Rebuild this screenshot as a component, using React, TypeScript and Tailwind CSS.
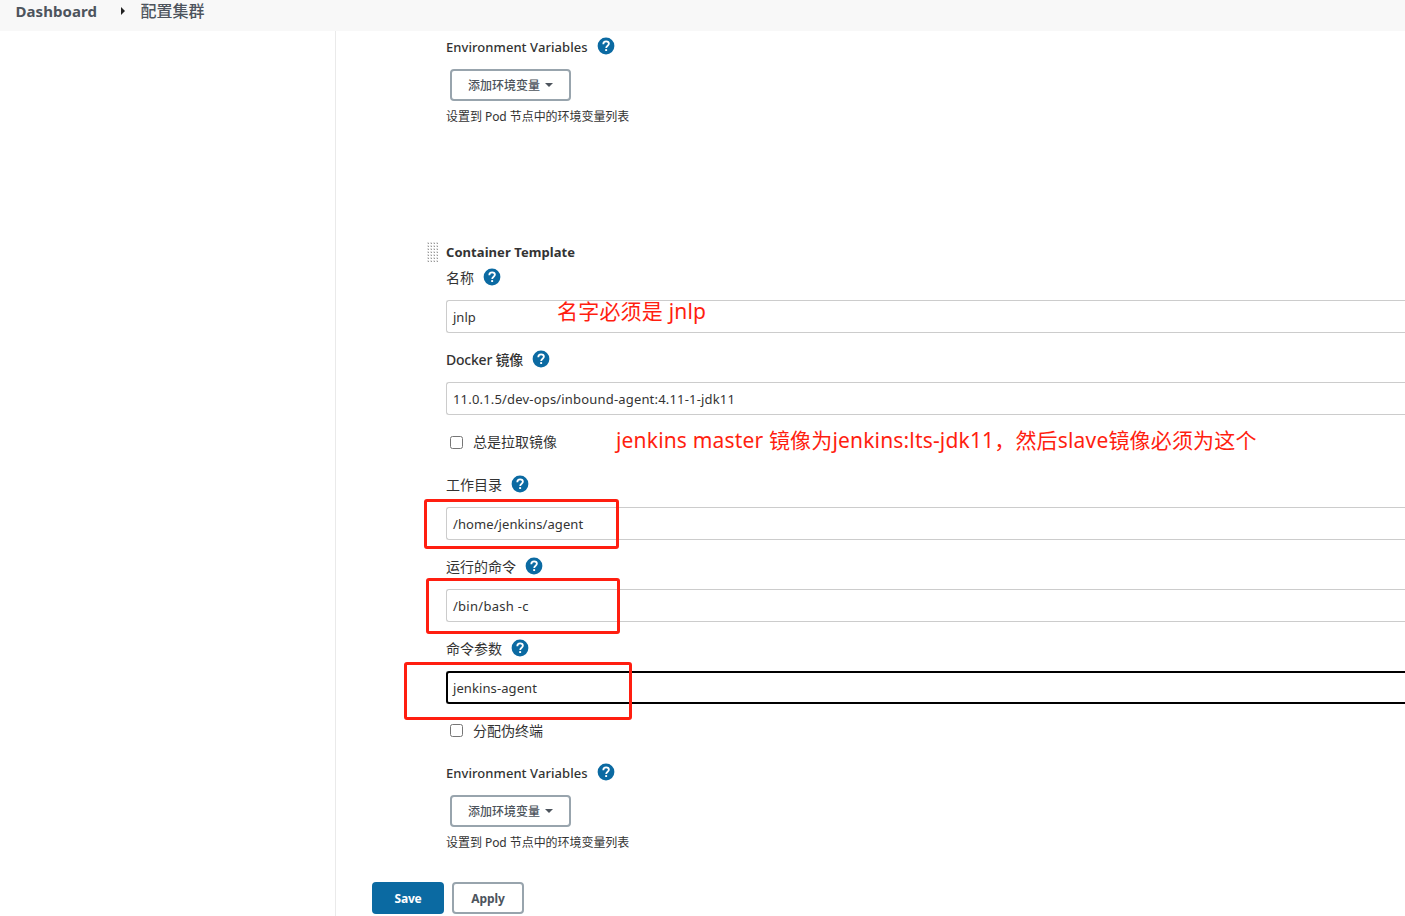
import type { ReactNode } from 'react';

function HelpIcon() {
  return (
    <svg className="size-5 shrink-0" viewBox="0 0 20 20" fill="none">
      <circle cx="10" cy="10" r="8.4" fill="#0b6aa2" />
      <path
        d="M7.3 8.2C7.3 6.4 8.5 5.4 10.1 5.4s2.8 1 2.8 2.4c0 1.9-2.7 2.1-2.7 4.2"
        stroke="#fff"
        strokeWidth="1.8"
      />
      <rect x="9.2" y="13.1" width="1.9" height="1.9" fill="#fff" />
    </svg>
  );
}

function Label({ text, track = '' }: { text: string; track?: string }) {
  return (
    <div className="flex h-5 items-center gap-2 text-sm leading-5 text-[#333]">
      <span className={`relative top-px whitespace-pre ${track}`}>{text}</span>
      <HelpIcon />
    </div>
  );
}

function Field({ value, track = '', focused = false, mark }: { value: string; track?: string; focused?: boolean; mark?: ReactNode }) {
  return (
    <div className="relative mt-[13px] h-[33px]">
      <div
        className={`flex h-[33px] items-center rounded-l-[3px] text-[#333] ${
          focused ? 'border-2 border-r-0 border-black pl-[5px]' : 'border border-r-0 border-[#ccc] pl-1.5'
        }`}
      >
        <span className={`relative top-px whitespace-pre text-[13px] ${track}`}>{value}</span>
      </div>
      {mark}
    </div>
  );
}

function Check({ text, textClass = '', mark }: { text: string; textClass?: string; mark?: ReactNode }) {
  return (
    <div className="relative flex h-5 items-center gap-2.5 pl-1 text-sm leading-5 text-[#333]">
      <span className="size-[13px] rounded-[2.5px] border border-[#767676] bg-white" />
      <span className={textClass}>{text}</span>
      {mark}
    </div>
  );
}

function EnvVars() {
  return (
    <>
      <Label text="Environment Variables" track="text-[13px] font-medium tracking-[0.06px]" />
      <button className="ml-1 mt-[13px] flex h-8 w-[121px] items-center justify-center gap-[5px] rounded-[4px] border-2 border-[#98a4ad] bg-white text-xs font-medium text-[#4d545d]">
        <span className="relative top-px">添加环境变量</span>
        <svg width="8" height="4" viewBox="0 0 8 4" fill="#4d545d">
          <path d="M0 0h8L4 4z" />
        </svg>
      </button>
      <p className="mt-1.5 h-[18px] whitespace-pre text-xs leading-[19px] tracking-[-0.05px] text-[#333]">设置到 Pod 节点中的环境变量列表</p>
    </>
  );
}

export default function App() {
  return (
    <div className="flex h-[916px] w-[1405px] flex-col overflow-hidden bg-white font-['Noto_Sans','Noto_Sans_CJK_SC',sans-serif]">
      <header className="flex h-[31px] shrink-0 items-start bg-[#f8f8f8] pl-[15.5px] text-base text-[#4d545d]">
        <span className="w-[105px] text-[15px] font-bold leading-[23px] tracking-[0.05px]">Dashboard</span>
        <svg className="mt-[7px] w-[4px]" height="8" viewBox="0 0 4 8" fill="#222">
          <path d="M0 0L4 4L0 8z" />
        </svg>
        <span className="ml-4 font-medium leading-[22px]">配置集群</span>
      </header>
      <div className="flex min-h-0 flex-1">
        <aside className="w-[336px] shrink-0 border-r border-[#eaeaea]" />
        <main className="flex min-w-0 flex-1 flex-col pt-[5px]">
          <div className="pl-[110px]">
            <EnvVars />
            <div className="relative mt-[117px] flex h-5 items-center text-[#333]">
              <svg className="absolute -left-[19px] top-0" width="12" height="20">
                <defs>
                  <pattern id="grip" width="3" height="3" patternUnits="userSpaceOnUse">
                    <rect width="2" height="2" fill="#e4e4e4" />
                    <rect x="1" y="1" width="1" height="1" fill="#999" />
                  </pattern>
                </defs>
                <rect width="12" height="20" fill="url(#grip)" />
              </svg>
              <span className="text-[13px] font-bold leading-5 tracking-[0.06px]">Container Template</span>
            </div>
            <div className="mt-[5px]">
              <Label text="名称" />
              <Field
                value="jnlp"
                mark={<span className="absolute left-[111px] top-[-3px] whitespace-pre text-[21px] leading-7 tracking-[0.2px] text-[#ff1e10]">名字必须是 jnlp</span>}
              />
            </div>
            <div className="mt-4">
              <Label text="Docker 镜像" track="font-medium tracking-[-0.22px]" />
              <Field value="11.0.1.5/dev-ops/inbound-agent:4.11-1-jdk11" track="tracking-[0.18px]" />
            </div>
            <div className="mt-[17px]">
              <Check
                text="总是拉取镜像"
                mark={
                  <span className="absolute left-[170px] top-[-6px] whitespace-pre text-[21px] leading-7 tracking-[0.17px] text-[#ff1e10]">
                    jenkins master 镜像为jenkins:lts-jdk11，然后slave镜像必须为这个
                  </span>
                }
              />
            </div>
            <div className="mt-[22px]">
              <Label text="工作目录" />
              <Field
                value="/home/jenkins/agent"
                track="tracking-[0.09px]"
                mark={<span className="absolute -left-[22px] -top-2 h-[50px] w-[195px] rounded-[3px] border-[3px] border-[#ff1e10]" />}
              />
            </div>
            <div className="mt-4">
              <Label text="运行的命令" />
              <Field
                value="/bin/bash -c"
                track="tracking-[0.27px]"
                mark={<span className="absolute -left-5 -top-[11px] h-14 w-[194px] rounded-[3px] border-[3px] border-[#ff1e10]" />}
              />
            </div>
            <div className="mt-4">
              <Label text="命令参数" />
              <Field
                focused
                value="jenkins-agent"
                track="tracking-[0.09px]"
                mark={<span className="absolute -left-[42px] -top-[9px] h-[58px] w-[228px] rounded-[3px] border-[3px] border-[#ff1e10]" />}
              />
            </div>
            <div className="mb-[22px] mt-4">
              <Check text="分配伪终端" textClass="pt-0.5" />
            </div>
            <EnvVars />
          </div>
          <div className="mt-[31px] flex gap-2 pl-9 text-xs">
            <button className="h-8 w-[72px] rounded-[4px] bg-[#0b6aa2] pt-px font-bold tracking-[-0.2px] text-white">Save</button>
            <button className="h-8 w-[72px] rounded-[4px] border-2 border-[#98a4ad] bg-white pt-px font-bold tracking-[-0.1px] text-[#4d545d]">Apply</button>
          </div>
        </main>
      </div>
    </div>
  );
}
